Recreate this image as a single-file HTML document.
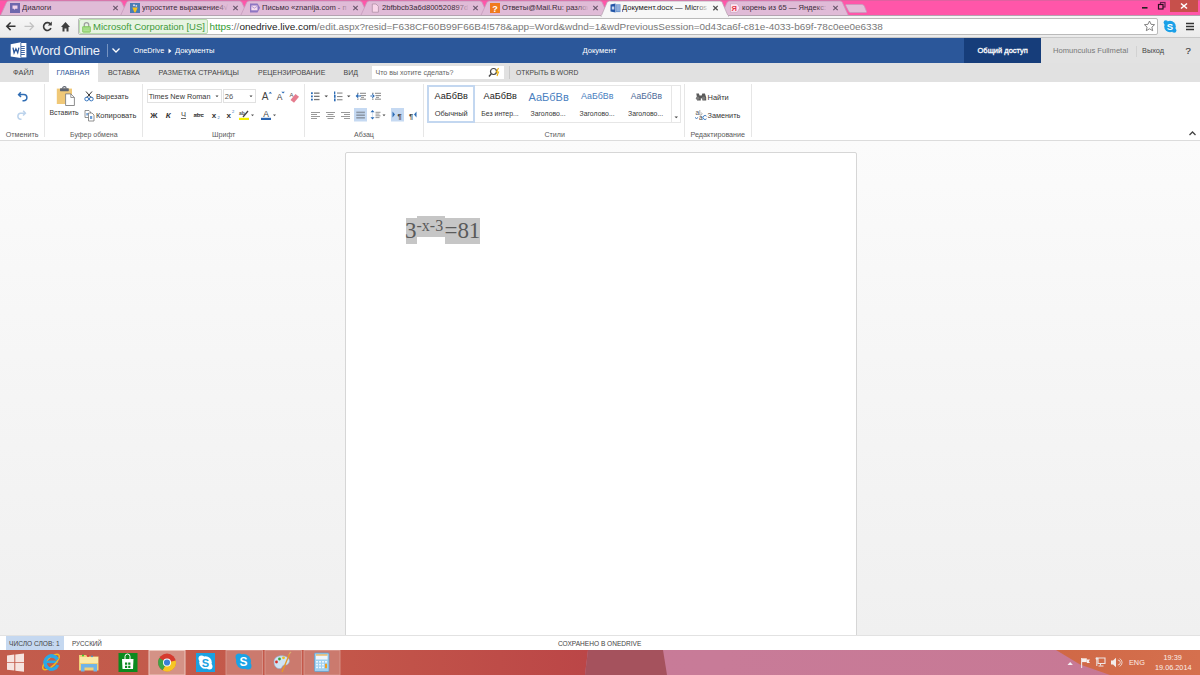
<!DOCTYPE html>
<html><head><meta charset="utf-8">
<style>
*{margin:0;padding:0;box-sizing:border-box}
html,body{width:1200px;height:675px;overflow:hidden;background:#fafafa;font-family:"Liberation Sans",sans-serif;position:relative}
.a{position:absolute;white-space:nowrap}
.t{position:absolute;white-space:nowrap;line-height:10px;height:10px}
/* chrome */
#strip{left:0;top:0;width:1200px;height:16px;background:#ff56a9;border-top:1px solid #e060a0}
.tt{top:3px;font-size:7.6px;color:#3a2b37;width:86px;overflow:hidden}
.tx{font-size:9px;color:#5a4a58}
#toolbar{left:0;top:15px;width:1200px;height:23px;background:linear-gradient(#f7f7f7,#ebebeb);border-top:1px solid #b4a3b0;border-bottom:1px solid #c8c8c8}
#omni{left:78px;top:18px;width:1080px;height:17px;background:#fff;border:1px solid #bababa;border-radius:2px}
#ev{left:79px;top:19px;width:129px;height:15px;background:#e7f4e2;border:1px solid #b8dcae;border-radius:2px}
/* word header */
#hdr{left:0;top:38px;width:1200px;height:25px;background:#2b579a}
#share{left:964px;top:38px;width:77px;height:25px;background:#163d7a}
#user{left:1041px;top:38px;width:159px;height:25px;background:#e2e2e2}
#tabs{left:0;top:63px;width:1200px;height:19px;background:#e1e1e1}
.rt{font-size:7.1px;color:#444}
#ribbon{left:0;top:82px;width:1200px;height:59px;background:#fff;border-bottom:1px solid #dcdcdc}
.sep{position:absolute;width:1px;background:#e6e6e6;top:84px;height:53px}
.gl{font-size:7.1px;color:#5a5a5a}
.lbl{font-size:7.3px;color:#363636}
#page{left:345px;top:152px;width:512px;height:490px;background:#fff;border:1px solid #d6d6d6;border-radius:2px}
#status{left:0;top:635px;width:1200px;height:15px;background:#fff;border-top:1px solid #e2e2e2}
#taskbar{left:0;top:650px;width:1200px;height:25px;background:linear-gradient(90deg,#c0584a 0px,#bf5049 300px,#bd4a47 586px,#a4525c 588px,#a4525c 664px,#c97b97 666px,#c97c98 1060px,#d46a4e 1090px,#d1694d 1200px)}
</style></head><body>
<!-- ========== CHROME ========== -->
<div class="a" id="strip"></div>
<svg class="a" style="left:0;top:0" width="1200" height="17">
<path d="M0.5 15.5 L6.5 2.5 Q7.3 1 9.0 1 L119.4 1 Q121.0 1 121.8 2.5 L127.8 15.5 Z" fill="#e0bbd7" stroke="#c79bbd" stroke-width="0.8"/>
<path d="M120.6 15.5 L126.6 2.5 Q127.4 1 129.1 1 L239.5 1 Q241.1 1 241.9 2.5 L247.9 15.5 Z" fill="#e0bbd7" stroke="#c79bbd" stroke-width="0.8"/>
<path d="M240.7 15.5 L246.7 2.5 Q247.5 1 249.2 1 L359.6 1 Q361.2 1 362.0 2.5 L368.0 15.5 Z" fill="#e0bbd7" stroke="#c79bbd" stroke-width="0.8"/>
<path d="M360.8 15.5 L366.8 2.5 Q367.6 1 369.3 1 L479.7 1 Q481.3 1 482.1 2.5 L488.1 15.5 Z" fill="#e0bbd7" stroke="#c79bbd" stroke-width="0.8"/>
<path d="M480.9 15.5 L486.9 2.5 Q487.7 1 489.4 1 L599.8 1 Q601.4 1 602.2 2.5 L608.2 15.5 Z" fill="#e0bbd7" stroke="#c79bbd" stroke-width="0.8"/>
<path d="M721.1 15.5 L727.1 2.5 Q727.9 1 729.6 1 L840.0 1 Q841.6 1 842.4 2.5 L848.4 15.5 Z" fill="#e0bbd7" stroke="#c79bbd" stroke-width="0.8"/>
<path d="M846.5 4.5 L862 4.5 Q863.5 4.5 864.3 6 L866.5 11.5 Q867 12.5 865.5 12.5 L850.5 12.5 Q849.3 12.5 848.7 11.3 L845.8 5.8 Q845.3 4.5 846.5 4.5Z" fill="#e2bdd8" stroke="#c79bbd" stroke-width="0.8"/>
<!-- window controls -->
<rect x="1170" y="0" width="28" height="12" fill="#c7504b"/>
<path d="M1181 3.5 L1187 8.5 M1187 3.5 L1181 8.5" stroke="#fff" stroke-width="1.6"/>
<rect x="1142" y="7" width="5.5" height="1.6" fill="#222"/>
<rect x="1160.5" y="2.5" width="4.5" height="4.5" fill="none" stroke="#6a2050" stroke-width="1.2"/>
<rect x="1158.5" y="4.5" width="4.5" height="4.5" fill="#ff56a9" stroke="#2a1020" stroke-width="1.2"/>
</svg>
<div class="a" id="toolbar"></div>
<svg class="a" style="left:0;top:0" width="1200" height="17">
<path d="M601.0 16.5 L607.0 2.5 Q607.8 1 609.5 1 L719.9 1 Q721.5 1 722.3 2.5 L728.3 16.5 Z" fill="#f7f7f7" stroke="#b9a3b4" stroke-width="0.8"/>
<rect x="601.5" y="15.2" width="126.5" height="2" fill="#f7f7f7"/>
</svg>
<!-- favicons -->
<svg class="a" style="left:0;top:0" width="880" height="16">
 <rect x="10" y="3" width="10" height="10" fill="#6f68ad"/>
 <path d="M12.5 5.5 h5 v3.2 h-2.2 l-1.3 1.4 v-1.4 h-1.5z" fill="#f2d2ec"/>
 <rect x="130" y="3" width="10" height="10" fill="#4a7db5"/>
 <path d="M132.3 7.5 h5.4 l-2.2 5 h-1z" fill="#f7c21c"/>
 <circle cx="134" cy="5.2" r="1" fill="#dde"/><circle cx="136.3" cy="5.8" r="0.9" fill="#dde"/>
 <path d="M250 3.5 h7.5 l2.6 4.3 l-2.6 4.7 h-7.5z" fill="#8e76c2"/>
 <rect x="251.3" y="5.5" width="6.2" height="4.8" fill="#f6dcef"/>
 <path d="M251.3 6 l3.1 2.2 l3.1 -2.2" stroke="#9c82c8" stroke-width="0.7" fill="none"/>
 <path d="M372.3 4 h3.7 l2.4 2.4 v5.8 h-6.1z" fill="#f9d6ea" stroke="#a88a9e" stroke-width="0.7"/>
 <rect x="490" y="3" width="10" height="10" fill="#f07a1e"/>
 <text x="495" y="11.5" font-family="Liberation Sans" font-size="9" font-weight="bold" fill="#fff" text-anchor="middle">?</text>
 <path d="M610.5 4.5 L615.5 3.5 V12.5 L610.5 11.5z" fill="#2457a8"/>
 <rect x="611.8" y="6.5" width="2.5" height="3" fill="#c8d6ee"/>
 <rect x="616" y="4.3" width="4.5" height="7.8" fill="#6f98d2"/>
 <path d="M616.5 6 h3.3 M616.5 8 h3.3 M616.5 10 h3.3" stroke="#c9d9f0" stroke-width="0.7"/>
 <path d="M730.5 3.8 h6.8 l2.5 4 l-2.5 4.5 h-6.8z" fill="#fde6f3" stroke="#c9a4be" stroke-width="0.7"/>
 <text x="734.3" y="11" font-family="Liberation Sans" font-size="7.5" font-weight="bold" fill="#e3354a" text-anchor="middle">Я</text>
</svg>
<div class="t tt" style="left:22px">Диалоги</div>
<div class="t tt" style="left:142px">упростите выражение4√</div>
<div class="t tt" style="left:262px">Письмо «znanija.com - п</div>
<div class="t tt" style="left:382px">2bfbbcb3a6d800520897d0</div>
<div class="t tt" style="left:502px">Ответы@Mail.Ru: разлож</div>
<div class="t tt" style="left:622px;color:#222">Документ.docx — Micros</div>
<div class="t tt" style="left:742px">корень из 65 — Яндекс: н</div>
<svg class="a" style="left:0;top:0" width="880" height="16">
 <defs>
  <linearGradient id="fadeP" x1="0" x2="1"><stop offset="0" stop-color="#e0bbd7" stop-opacity="0"/><stop offset="1" stop-color="#e0bbd7"/></linearGradient>
  <linearGradient id="fadeW" x1="0" x2="1"><stop offset="0" stop-color="#f7f7f7" stop-opacity="0"/><stop offset="1" stop-color="#f7f7f7"/></linearGradient>
 </defs>
 <rect x="96" y="2" width="13" height="12" fill="url(#fadeP)"/>
 <rect x="216" y="2" width="13" height="12" fill="url(#fadeP)"/>
 <rect x="336" y="2" width="13" height="12" fill="url(#fadeP)"/>
 <rect x="456" y="2" width="13" height="12" fill="url(#fadeP)"/>
 <rect x="576" y="2" width="13" height="12" fill="url(#fadeP)"/>
 <rect x="696" y="2" width="13" height="12" fill="url(#fadeW)"/>
 <rect x="816" y="2" width="13" height="12" fill="url(#fadeP)"/>
 <g stroke="#67546a" stroke-width="1.15">
  <path d="M113.3 5.9 l4.4 4.3 M117.7 5.9 l-4.4 4.3"/>
  <path d="M233.3 5.9 l4.4 4.3 M237.7 5.9 l-4.4 4.3"/>
  <path d="M353.3 5.9 l4.4 4.3 M357.7 5.9 l-4.4 4.3"/>
  <path d="M473.3 5.9 l4.4 4.3 M477.7 5.9 l-4.4 4.3"/>
  <path d="M593.3 5.9 l4.4 4.3 M597.7 5.9 l-4.4 4.3"/>
  <path d="M833.3 5.9 l4.4 4.3 M837.7 5.9 l-4.4 4.3"/>
 </g>
 <path d="M713.3 5.9 l4.4 4.3 M717.7 5.9 l-4.4 4.3" stroke="#505050" stroke-width="1.3"/>
</svg>
<!-- toolbar icons -->
<svg class="a" style="left:0;top:16px" width="80" height="22">
 <path d="M7 10.3 h8.5 M10.6 6.5 l-3.8 3.8 l3.8 3.8" stroke="#353535" stroke-width="1.5" fill="none"/>
 <path d="M33.5 10.3 h-9 M29.7 6.5 l3.8 3.8 l-3.8 3.8" stroke="#c2c2c2" stroke-width="1.3" fill="none"/>
 <path d="M50.6 8.2 A3.9 3.9 0 1 0 51 12.2" stroke="#3a3a3a" stroke-width="1.6" fill="none"/>
 <path d="M51.8 5.6 v4 h-4z" fill="#3a3a3a"/>
 <path d="M61 11 l4.5 -5 l4.5 5 h-1.5 v4.5 h-2 v-3 h-2 v3 h-2 v-4.5z" fill="#3e3e3e"/>
</svg>
<div class="a" id="omni"></div>
<div class="a" id="ev"></div>
<svg class="a" style="left:80px;top:18px" width="14" height="18">
 <path d="M4.3 9 v-2.2 a2.2 2.2 0 0 1 4.4 0 v2.2" stroke="#a0a0a0" stroke-width="1.3" fill="none"/>
 <rect x="2.5" y="8.5" width="8" height="5.8" rx="0.8" fill="#9ad77a" stroke="#78c052" stroke-width="0.6"/>
 <path d="M3.5 11 h6 M3.5 12.6 h6" stroke="#c9ecb6" stroke-width="0.5"/>
</svg>
<div class="t" style="left:93px;top:21.5px;font-size:9.5px;color:#3e9a3a">Microsoft Corporation [US]</div>
<div class="t" style="left:209.5px;top:21.5px;font-size:9.96px;color:#777"><span style="color:#2f9a2f">https</span>://<span style="color:#222">onedrive.live.com</span>/edit.aspx?resid=F638CF60B99F66B4!578&amp;app=Word&amp;wdnd=1&amp;wdPreviousSession=0d43ca6f-c81e-4033-b69f-78c0ee0e6338</div>
<svg class="a" style="left:1140px;top:16px" width="60" height="22">
 <path d="M9.5 5 l1.5 3.3 l3.6 0.4 l-2.7 2.4 l0.8 3.6 l-3.2 -1.9 l-3.2 1.9 l0.8 -3.6 l-2.7 -2.4 l3.6 -0.4z" fill="#fff" stroke="#777" stroke-width="0.9" stroke-linejoin="round"/>
 <circle cx="30" cy="10.5" r="5.8" fill="#1aa0e8"/>
 <circle cx="25.8" cy="6.5" r="2.2" fill="#1aa0e8"/><circle cx="34.2" cy="14.5" r="2.2" fill="#1aa0e8"/>
 <text x="30" y="14" font-family="Liberation Sans" font-size="9.5" font-weight="bold" fill="#fff" text-anchor="middle">S</text>
 <path d="M46 7.5 h8 M46 10.5 h8 M46 13.5 h8" stroke="#333" stroke-width="1.5"/>
</svg>

<!-- ========== WORD HEADER ========== -->
<div class="a" id="hdr"></div>
<div class="a" id="share"></div>
<div class="a" id="user"></div>
<svg class="a" style="left:0;top:38px" width="130" height="25">
 <rect x="20.6" y="5" width="5.8" height="14.4" fill="#fff"/>
 <path d="M21 8.5 h3.8 M21 10.5 h3.8 M21 12.5 h3.8 M21 14.5 h3.8 M21 16.5 h3.8" stroke="#2b579a" stroke-width="0.9"/>
 <path d="M10.7 6.2 L20.8 4.2 L20.8 20.1 L10.7 18.5z" fill="#fff"/>
 <path d="M13 9.6 L14.1 14.8 L15.9 10.8 L17.7 14.8 L18.9 9.6" stroke="#2b579a" stroke-width="1.3" fill="none" stroke-linejoin="miter"/>
 <rect x="20.5" y="5" width="0.8" height="14.5" fill="#2b579a"/>
 <rect x="107" y="6" width="0.8" height="13" fill="#8aa4cc"/>
 <path d="M112.5 10.5 l3.5 3.5 l3.5 -3.5" stroke="#fff" stroke-width="1.3" fill="none"/>
</svg>
<div class="t" style="left:30.5px;top:46.2px;font-size:13px;letter-spacing:-0.25px;color:#eef2f8">Word Online</div>
<div class="t" style="left:133.5px;top:46px;font-size:7.3px;color:#fff">OneDrive</div>
<svg class="a" style="left:168px;top:48px" width="5" height="6"><path d="M0.5 0.5 L3.5 3 L0.5 5.5z" fill="#fff"/></svg>
<div class="t" style="left:175px;top:46px;font-size:7.7px;color:#fff">Документы</div>
<div class="t" style="left:582.5px;top:46px;font-size:7.6px;color:#fff">Документ</div>
<div class="t" style="left:977.5px;top:46px;font-size:7.5px;-webkit-text-stroke:0.3px #fff;color:#fff">Общий доступ</div>
<div class="t" style="left:1053px;top:45.7px;font-size:7.6px;color:#777">Homunculus Fullmetal</div>
<div class="a" style="left:1135.5px;top:45.5px;width:1px;height:11px;background:#d2d2d2"></div>
<div class="t" style="left:1142px;top:45.7px;font-size:7.35px;color:#444">Выход</div>
<div class="t" style="left:1185.5px;top:45.5px;font-size:9.5px;-webkit-text-stroke:0.2px #444;color:#444">?</div>

<!-- ribbon tabs -->
<div class="a" id="tabs"></div>
<div class="a" style="left:49px;top:63px;width:49px;height:19px;background:#fff"></div>
<div class="t rt" style="left:13px;top:67.9px;font-size:7.4px">ФАЙЛ</div>
<div class="t rt" style="left:56.5px;top:67.9px;font-size:7.2px;color:#2b579a">ГЛАВНАЯ</div>
<div class="t rt" style="left:108px;top:67.9px">ВСТАВКА</div>
<div class="t rt" style="left:158.5px;top:67.9px;font-size:7.23px">РАЗМЕТКА СТРАНИЦЫ</div>
<div class="t rt" style="left:258px;top:67.9px;font-size:7px">РЕЦЕНЗИРОВАНИЕ</div>
<div class="t rt" style="left:343.5px;top:67.9px;font-size:7px">ВИД</div>
<div class="a" style="left:372px;top:66px;width:132px;height:13px;background:#fff"></div>
<div class="t" style="left:375.5px;top:67.5px;font-size:7.06px;color:#666">Что вы хотите сделать?</div>
<svg class="a" style="left:488px;top:66px" width="14" height="13">
 <circle cx="5.5" cy="5.5" r="3" stroke="#444" stroke-width="1.2" fill="none"/>
 <path d="M3.3 7.7 l-2.3 2.8" stroke="#444" stroke-width="1.4"/>
 <path d="M10.5 2 l-2 4 h2 l-1.5 4" stroke="#f0b000" stroke-width="1.1" fill="none"/>
</svg>
<div class="a" style="left:509px;top:66px;width:1px;height:13px;background:#c9c9c9"></div>
<div class="t rt" style="left:516px;top:67.9px;font-size:6.8px">ОТКРЫТЬ В WORD</div>

<!-- ribbon body -->
<div class="a" id="ribbon"></div>
<div class="sep" style="left:44px"></div>
<div class="sep" style="left:142px"></div>
<div class="sep" style="left:304px"></div>
<div class="sep" style="left:423px"></div>
<div class="sep" style="left:684px"></div>
<div class="sep" style="left:751px"></div>
<!-- group labels -->
<div class="t gl" style="left:5.8px;top:130.3px;font-size:7.15px">Отменить</div>
<div class="t gl" style="left:70px;top:130.3px;font-size:7px">Буфер обмена</div>
<div class="t gl" style="left:212px;top:130.3px">Шрифт</div>
<div class="t gl" style="left:354px;top:130.3px">Абзац</div>
<div class="t gl" style="left:544.5px;top:130.3px">Стили</div>
<div class="t gl" style="left:690.5px;top:130.3px;font-size:7.17px">Редактирование</div>
<!-- undo/redo -->
<svg class="a" style="left:14px;top:88px" width="18" height="34">
 <path d="M6.8 4.2 L4.6 6.6 L7 8.9" stroke="#2f6cb3" stroke-width="1.5" fill="none" stroke-linejoin="miter"/>
 <path d="M5 6.6 H9.8 A3.1 3.1 0 0 1 9.8 12.8 H8.5" stroke="#2f6cb3" stroke-width="1.5" fill="none"/>
 <path d="M9.2 22.8 L11.4 25.2 L9 27.5" stroke="#bcd3ec" stroke-width="1.5" fill="none"/>
 <path d="M11 25.2 H6.2 A3.1 3.1 0 0 0 6.2 31.2 H7.5" stroke="#bcd3ec" stroke-width="1.5" fill="none"/>
</svg>
<!-- paste -->
<svg class="a" style="left:55px;top:85px" width="22" height="22">
 <rect x="1.8" y="3.6" width="15.2" height="15.4" fill="#f0c877"/>
 <rect x="5" y="3.2" width="8.8" height="3" rx="0.6" fill="#5e6470"/>
 <path d="M7.6 3.4 a1.8 1.8 0 0 1 3.6 0" fill="none" stroke="#5e6470" stroke-width="1.1"/>
 <path d="M10.6 8.9 h5.2 l3.6 3.6 v8 h-8.8z" fill="#fff" stroke="#808080" stroke-width="0.9"/>
 <path d="M15.8 8.9 v3.6 h3.6" fill="none" stroke="#808080" stroke-width="0.8"/>
</svg>
<div class="t lbl" style="left:49.5px;top:108.1px;font-size:6.9px">Вставить</div>
<svg class="a" style="left:83px;top:90px" width="13" height="32">
 <path d="M3 1.5 L8.5 8 M9 1.5 L3.5 8" stroke="#333" stroke-width="1"/>
 <circle cx="3.7" cy="9" r="1.9" fill="none" stroke="#3a78c0" stroke-width="1"/>
 <circle cx="8.3" cy="9" r="1.9" fill="none" stroke="#3a78c0" stroke-width="1"/>
 <path d="M2 20.5 h4 l1.5 1.5 v5.5 h-5.5z" fill="#fff" stroke="#777" stroke-width="0.8"/>
 <path d="M5.5 23 h3.5 l2 2 v6 h-5.5z" fill="#fff" stroke="#777" stroke-width="0.8"/>
 <rect x="7" y="26" width="2.2" height="3" fill="#6fa0d8"/>
 <rect x="3.3" y="23" width="1.6" height="2.5" fill="#6fa0d8"/>
</svg>
<div class="t lbl" style="left:96px;top:92.1px;font-size:7.3px">Вырезать</div>
<div class="t lbl" style="left:96px;top:110.8px;font-size:7.5px">Копировать</div>
<!-- font group -->
<div class="a" style="left:147px;top:89px;width:75px;height:14px;border:1px solid #e1e1e1;background:#fff"></div>
<div class="t lbl" style="left:148.7px;top:92.1px;font-size:7.3px">Times New Roman</div>
<div class="a" style="left:223px;top:89px;width:33px;height:14px;border:1px solid #e1e1e1;background:#fff"></div>
<div class="t lbl" style="left:224.8px;top:92.1px;font-size:7.5px;color:#555">26</div>
<svg class="a" style="left:140px;top:86px" width="170" height="38">
 <path d="M75.5 9.5 h3 l-1.5 1.8z M109.5 9.5 h3 l-1.5 1.8z" fill="#444"/>
 <text x="125" y="14" font-family="Liberation Sans" font-size="10" fill="#444" text-anchor="middle">A</text>
 <path d="M128.5 7.5 l1.8 -1.8 l1.8 1.8z" fill="#2b6cb8"/>
 <text x="139.5" y="14" font-family="Liberation Sans" font-size="8.5" fill="#444" text-anchor="middle">A</text>
 <path d="M141.3 5.7 h3.6 l-1.8 1.8z" fill="#2b6cb8"/>
 <text x="151.5" y="11" font-family="Liberation Sans" font-size="6" fill="#555" text-anchor="middle">A</text>
 <path d="M150.5 14 l5 -6 l3.5 2.8 l-5 6z" fill="#e57c8e"/>
 <text x="13.8" y="31.8" font-family="Liberation Sans" font-size="8" font-weight="bold" fill="#333" text-anchor="middle">Ж</text>
 <text x="28.2" y="31.8" font-family="Liberation Sans" font-size="8" font-weight="bold" font-style="italic" fill="#333" text-anchor="middle">К</text>
 <text x="43.5" y="31" font-family="Liberation Sans" font-size="7.5" fill="#444" text-anchor="middle">Ч</text>
 <rect x="41" y="32" width="5" height="0.8" fill="#444"/>
 <text x="58.7" y="31" font-family="Liberation Sans" font-size="6" font-weight="bold" fill="#444" text-anchor="middle">abc</text>
 <rect x="54" y="28.4" width="9.5" height="0.7" fill="#444"/>
 <text x="74" y="31.8" font-family="Liberation Sans" font-size="8" font-weight="bold" fill="#333" text-anchor="middle">x</text>
 <text x="78.5" y="33" font-family="Liberation Sans" font-size="4" fill="#2b6cb8" text-anchor="middle">2</text>
 <text x="88.7" y="31.8" font-family="Liberation Sans" font-size="8" font-weight="bold" fill="#333" text-anchor="middle">x</text>
 <text x="93" y="27" font-family="Liberation Sans" font-size="4" fill="#2b6cb8" text-anchor="middle">2</text>
 <text x="102" y="29" font-family="Liberation Sans" font-size="5" font-weight="bold" fill="#555" text-anchor="middle">ab</text>
 <path d="M103 31 l5 -6" stroke="#444" stroke-width="1.3"/>
 <rect x="99" y="31.8" width="10" height="2.2" fill="#f5f000"/>
 <path d="M111 28.5 h3 l-1.5 1.8z" fill="#555"/>
 <text x="126" y="31" font-family="Liberation Sans" font-size="8.5" fill="#444" text-anchor="middle">A</text>
 <rect x="121" y="31.8" width="10" height="2.2" fill="#2b64b0"/>
 <path d="M133 28.5 h3 l-1.5 1.8z" fill="#555"/>
</svg>
<!-- paragraph group -->
<svg class="a" style="left:304px;top:86px" width="120" height="38">
 <g fill="#2c6cb6"><rect x="7" y="6.3" width="1.8" height="1.8"/><rect x="7" y="9.5" width="1.8" height="1.8"/><rect x="7" y="12.7" width="1.8" height="1.8"/></g>
 <g fill="#777"><rect x="10" y="6.5" width="5.5" height="1.3"/><rect x="10" y="9.7" width="5.5" height="1.3"/><rect x="10" y="12.9" width="5.5" height="1.3"/></g>
 <path d="M20.5 9.5 h3.5 l-1.75 1.8z M43 9.5 h3.5 l-1.75 1.8z" fill="#444"/>
 <g fill="#2c6cb6"><rect x="30" y="5.5" width="1.3" height="3"/><rect x="30" y="9" width="1.6" height="2.8"/><rect x="30" y="12.5" width="1.6" height="2.8"/></g>
 <g fill="#888"><rect x="33" y="6.5" width="5.5" height="1.1"/><rect x="33" y="10" width="5.5" height="1.1"/><rect x="33" y="13.2" width="5.5" height="1.1"/></g>
 <g fill="#777"><rect x="53" y="6.8" width="1.6" height="0.9"/><rect x="56" y="6.8" width="6" height="0.9"/><rect x="56.5" y="9.2" width="5.5" height="0.9"/><rect x="57" y="10.9" width="3" height="0.8"/><rect x="53" y="12.7" width="1.6" height="0.9"/><rect x="56" y="12.7" width="6" height="0.9"/></g>
 <path d="M51.6 10 l2.6 -2.4 v4.8z M54 9.5 h3 v1 h-3z" fill="#2c6cb6"/>
 <g fill="#777"><rect x="68" y="6.8" width="1.6" height="0.9"/><rect x="71" y="6.8" width="6" height="0.9"/><rect x="71.5" y="9.2" width="5.5" height="0.9"/><rect x="72" y="10.9" width="3" height="0.8"/><rect x="68" y="12.7" width="1.6" height="0.9"/><rect x="71" y="12.7" width="6" height="0.9"/></g>
 <path d="M70.8 10 l-2.6 -2.4 v4.8z M66.4 9.5 h2.6 v1 h-2.6z" fill="#2c6cb6"/>
 <!-- align row -->
 <g fill="#999">
  <rect x="7" y="26" width="9" height="1"/><rect x="7" y="28" width="6" height="1"/><rect x="7" y="30" width="9" height="1"/><rect x="7" y="32" width="6" height="1"/>
  <rect x="22" y="26" width="9" height="1"/><rect x="23.5" y="28" width="6" height="1"/><rect x="22" y="30" width="9" height="1"/><rect x="23.5" y="32" width="6" height="1"/>
  <rect x="37" y="26" width="9" height="1"/><rect x="40" y="28" width="6" height="1"/><rect x="37" y="30" width="9" height="1"/><rect x="40" y="32" width="6" height="1"/>
 </g>
 <rect x="50" y="22" width="13" height="13.5" fill="#c5d9f2"/>
 <g fill="#8e99a8"><rect x="52.3" y="25.6" width="8.6" height="1.6"/><rect x="52.3" y="28.4" width="8.6" height="1.6"/><rect x="52.3" y="31" width="8.6" height="1.6"/></g>
 <path d="M68.5 24 l2 2.2 h-4z M68.5 33.5 l2 -2.2 h-4z" fill="#2c6cb6"/>
 <path d="M68.5 26.5 v4.5" stroke="#8fb0d8" stroke-width="0.7" stroke-dasharray="1 1"/>
 <g fill="#888"><rect x="71.5" y="25.8" width="5" height="0.9"/><rect x="71.5" y="27.6" width="4" height="0.9"/><rect x="71.5" y="29.4" width="5" height="0.9"/><rect x="71.5" y="31.2" width="4" height="0.9"/></g>
 <path d="M78.5 28.5 h3 l-1.5 1.8z" fill="#444"/>
 <rect x="87" y="22" width="13" height="13.5" fill="#c5d9f2"/>
 <path d="M88.5 25.5 l2.5 3 l-2.5 3z" fill="#2c6cb6"/>
 <text x="95.5" y="32.5" font-family="Liberation Sans" font-size="7.5" font-weight="bold" fill="#444" text-anchor="middle">¶</text>
 <text x="107" y="32.5" font-family="Liberation Sans" font-size="7.5" font-weight="bold" fill="#444" text-anchor="middle">¶</text>
 <path d="M112.5 25.5 l-2.5 3 l2.5 3z" fill="#2c6cb6"/>
</svg>
<!-- styles gallery -->
<div class="a" style="left:427px;top:84.5px;width:254px;height:38px;border:1px solid #e6e6e6;background:#fff"></div>
<div class="a" style="left:671px;top:85px;width:1px;height:37px;background:#e6e6e6"></div>
<div class="a" style="left:427px;top:84.5px;width:48px;height:38px;border:2.5px solid #c3d7f0"></div>
<div class="t" style="left:434.5px;top:91.2px;font-size:9.1px;color:#222">АаБбВв</div>
<div class="t lbl" style="left:434.8px;top:109.0px;font-size:7.46px">Обычный</div>
<div class="t" style="left:483.5px;top:91.2px;font-size:9.1px;color:#222">АаБбВв</div>
<div class="t lbl" style="left:481.3px;top:109.0px;font-size:6.9px">Без интер...</div>
<div class="t" style="left:528.5px;top:92.4px;font-size:11px;color:#4a80c0">АаБбВв</div>
<div class="t lbl" style="left:530.5px;top:109.0px;font-size:6.9px">Заголово...</div>
<div class="t" style="left:581px;top:90.9px;font-size:8.9px;color:#4a80c0">АаБбВв</div>
<div class="t lbl" style="left:579.5px;top:109.0px;font-size:6.9px">Заголово...</div>
<div class="t" style="left:630.8px;top:90.9px;font-size:8.5px;color:#4c6a98">АаБбВв</div>
<div class="t lbl" style="left:628px;top:109.0px;font-size:6.9px">Заголово...</div>
<svg class="a" style="left:673px;top:115px" width="7" height="5"><path d="M1.5 1.5 h3.5 l-1.75 1.8z" fill="#444"/></svg>
<!-- editing group -->
<svg class="a" style="left:694px;top:90px" width="14" height="32">
 <path d="M2.3 3.5 h2.6 l0.6 2 h2.2 l0.6 -2 h2.6 l1.3 4 v3 h-3.8 v-2.2 h-1.6 v2.2 h-3.8 v-3z" fill="#5a5a5a"/>
 <circle cx="3.6" cy="8.3" r="1.7" fill="#7a7a7a"/><circle cx="9.6" cy="8.3" r="1.7" fill="#7a7a7a"/>
 <text x="1.5" y="25" font-family="Liberation Sans" font-size="6.5" fill="#555">a</text>
 <path d="M5.8 20 v5 a1.4 1.4 0 0 0 1.4 -2.5" stroke="#888" stroke-width="0.7" fill="none"/>
 <text x="5" y="30" font-family="Liberation Sans" font-size="6.5" fill="#444">a</text>
 <path d="M12.5 26.2 a2 2 0 1 0 0 2.6" stroke="#2c6cb6" stroke-width="0.9" fill="none"/>
 <path d="M1 27.5 l1.5 1 l1.6 -1" stroke="#2c6cb6" stroke-width="0.9" fill="none"/>
</svg>
<div class="t lbl" style="left:707.5px;top:92.6px;font-size:7.46px">Найти</div>
<div class="t lbl" style="left:707.5px;top:111.0px;font-size:7.3px">Заменить</div>
<svg class="a" style="left:1187.5px;top:129.5px" width="10" height="8"><path d="M1.5 5 l3 -3 l3 3" stroke="#444" stroke-width="1.3" fill="none"/></svg>
<!-- canvas strip -->
<div class="a" style="left:0;top:141px;width:1200px;height:494px;background:linear-gradient(#fbfbfb,#f5f5f5 52%,#f0f0f0)"></div>

<!-- ========== PAGE ========== -->
<div class="a" id="page"></div>
<div class="a" style="left:405.8px;top:217.5px;width:11px;height:26.3px;background:#c6c6c6"></div>
<div class="a" style="left:416.8px;top:215.8px;width:28.2px;height:21.2px;background:#c6c6c6"></div>
<div class="a" style="left:445px;top:217.5px;width:35px;height:26.3px;background:#c6c6c6"></div>
<div class="a" style="left:405px;top:209px;font-family:'Liberation Serif',serif;font-size:23px;line-height:34px;color:#5a5a5a">3<span style="font-size:16px;vertical-align:6.6px">-x-3</span><span style="margin-left:1.4px">=8</span><span style="margin-left:-0.4px">1</span></div>

<!-- ========== STATUS ========== -->
<div class="a" id="status"></div>
<div class="a" style="left:6px;top:636px;width:58px;height:14px;background:#c5d8f0"></div>
<div class="t" style="left:9px;top:638.8px;font-size:6.6px;color:#444">ЧИСЛО СЛОВ: 1</div>
<div class="t" style="left:72px;top:638.8px;font-size:6.3px;color:#444">РУССКИЙ</div>
<div class="t" style="left:558px;top:638.8px;font-size:6.57px;color:#444">СОХРАНЕНО В ONEDRIVE</div>

<!-- ========== TASKBAR ========== -->
<svg class="a" style="left:0;top:650px" width="1200" height="25">
 <defs>
  <linearGradient id="tbL" x1="0" x2="1"><stop offset="0" stop-color="#c25c4c"/><stop offset="0.55" stop-color="#c4584a"/><stop offset="1" stop-color="#bb4647"/></linearGradient>
  <linearGradient id="tbP" x1="0" x2="1"><stop offset="0" stop-color="#c87a96"/><stop offset="0.6" stop-color="#c87b98"/><stop offset="1" stop-color="#c77894"/></linearGradient>
  <linearGradient id="tbO" x1="0" x2="1"><stop offset="0" stop-color="#d06846"/><stop offset="1" stop-color="#d5704e"/></linearGradient>
 </defs>
 <rect x="0" y="0" width="1200" height="25" fill="url(#tbP)"/>
 <path d="M0 0 H588 L585 25 H0z" fill="url(#tbL)"/>
 <path d="M588 0 H663 L667 25 H585z" fill="#a5525d"/>
 <path d="M1056 0 H1200 V25 H1110 L1080 14.5z" fill="url(#tbO)"/>
 <!-- buttons -->
 <rect x="149" y="0.5" width="36" height="24.5" fill="#d49286" stroke="#ecc6bd" stroke-width="1"/>
 <rect x="226" y="0.5" width="36.5" height="24.5" fill="#cb7a6e" stroke="#d99c92" stroke-width="0.8"/>
 <rect x="265" y="0.5" width="36.5" height="24.5" fill="#cb7a6e" stroke="#d99c92" stroke-width="0.8"/>
 <rect x="304" y="0.5" width="36" height="24.5" fill="#cb7a6e" stroke="#d99c92" stroke-width="0.8"/>
 <!-- windows logo -->
 <path d="M7 5.5 L14.3 4.6 V12.2 H7z M15.3 4.5 L24 3.5 V12.2 H15.3z M7 13.1 H14.3 V20.6 L7 19.7z M15.3 13.1 H24 V21.7 L15.3 20.7z" fill="#f6e4e0"/>
 <!-- IE -->
 <path d="M57.8 15 A6.6 6.6 0 1 1 57.5 9.5" stroke="#2aa8e6" stroke-width="3.2" fill="none"/>
 <path d="M45.5 11.8 h12.6" stroke="#2aa8e6" stroke-width="2.6"/>
 <ellipse cx="51" cy="12" rx="10.5" ry="4.2" transform="rotate(-42 51 12)" fill="none" stroke="#f0b820" stroke-width="1.4"/>
 <path d="M57.8 15 A6.6 6.6 0 1 1 57.5 9.5" stroke="#2aa8e6" stroke-width="3.2" fill="none" stroke-dasharray="0 8 40"/>
 <!-- explorer -->
 <path d="M79 5 h7 l1.5 1.5 h11 v14 h-19.5z" fill="#f0d27a"/>
 <rect x="80" y="7" width="18" height="6" fill="#fbeaa8"/>
 <circle cx="83" cy="5.5" r="0.9" fill="#2c2"/><circle cx="88" cy="6" r="0.9" fill="#d33"/><circle cx="92" cy="6.3" r="0.9" fill="#39d"/>
 <path d="M81 14 h16 v7.5 h-3.5 v-4 h-9 v4 h-3.5z" fill="#6fb4e8"/>
 <!-- store -->
 <rect x="118.5" y="3" width="19" height="19" fill="#0b8a1e"/>
 <path d="M122 9 h11.5 l-0.5 10 h-10.5z" fill="#fff"/>
 <path d="M125 9 v-2.5 a2.5 2.5 0 0 1 5 0 v2.5" stroke="#fff" stroke-width="1" fill="none"/>
 <path d="M125 12.5 h2.2 v2.2 h-2.2z M128.2 12.5 h2.2 v2.2 h-2.2z M125 15.7 h2.2 v2.2 h-2.2z M128.2 15.7 h2.2 v2.2 h-2.2z" fill="#0b8a1e"/>
 <!-- chrome -->
 <circle cx="167" cy="12.5" r="9" fill="#d63a2f"/>
 <path d="M167 12.5 L175.8 10.6 A9 9 0 0 1 162.5 20.3z" fill="#f6c624"/>
 <path d="M167 12.5 L162.5 20.3 A9 9 0 0 1 159.2 8z" fill="#3aa648"/>
 <circle cx="167" cy="12.5" r="4" fill="#fff"/>
 <circle cx="167" cy="12.5" r="3.1" fill="#3a7fd6"/>
 <!-- skype square -->
 <rect x="196" y="3" width="19" height="19" fill="#1ba1e2"/>
 <circle cx="205.5" cy="12.5" r="6.3" fill="#fff"/>
 <circle cx="201.5" cy="8.5" r="3" fill="#fff"/><circle cx="209.5" cy="16.5" r="3" fill="#fff"/>
 <text x="205.5" y="16.5" font-family="Liberation Sans" font-size="11" font-weight="bold" fill="#1ba1e2" text-anchor="middle">S</text>
 <!-- skype 2 -->
 <circle cx="243.5" cy="11.5" r="7.5" fill="#1aa2e6"/>
 <circle cx="239" cy="7" r="3.5" fill="#1aa2e6"/><circle cx="248" cy="16" r="3.5" fill="#1aa2e6"/>
 <text x="243.5" y="16" font-family="Liberation Sans" font-size="12" font-weight="bold" fill="#fff" text-anchor="middle">S</text>
 <!-- paint -->
 <path d="M274 12 c0 -5 5 -7 10 -6 c5 1 7 5 4 8 c-2 2 -5 0 -6 3 c-1 3 -8 2 -8 -5z" fill="#cfe4f4" stroke="#8fb6d6" stroke-width="0.6"/>
 <circle cx="276.5" cy="12" r="1.4" fill="#d8322a"/><circle cx="279.5" cy="9" r="1.4" fill="#3ba33a"/><circle cx="283.5" cy="7.8" r="1.4" fill="#f0c020"/>
 <path d="M282 22 L289.5 4" stroke="#e59a2a" stroke-width="1.4"/>
 <path d="M288.5 5 l1.5 -3.5 l1.5 1z" fill="#d9b070"/>
 <!-- calc -->
 <rect x="314.5" y="3" width="14.5" height="18.5" rx="1" fill="#9fd0f0" stroke="#5b9fd0" stroke-width="0.7"/>
 <rect x="316" y="4.5" width="11.5" height="5" fill="#eef6fc"/>
 <rect x="316" y="4.5" width="11.5" height="1" fill="#f0a020"/>
 <g fill="#eaf5fc"><rect x="316" y="11" width="2" height="1.6"/><rect x="319" y="11" width="2" height="1.6"/><rect x="322" y="11" width="2" height="1.6"/><rect x="325" y="11" width="2" height="1.6"/>
 <rect x="316" y="13.8" width="2" height="1.6"/><rect x="319" y="13.8" width="2" height="1.6"/><rect x="322" y="13.8" width="2" height="1.6"/>
 <rect x="316" y="16.6" width="2" height="1.6"/><rect x="319" y="16.6" width="2" height="1.6"/><rect x="322" y="16.6" width="2" height="1.6"/></g>
 <rect x="325" y="13.8" width="2" height="4.4" fill="#f0a020"/>
 <!-- tray -->
 <path d="M1067.5 15 l2.7 -3 l2.7 3z" fill="#f4f0f4"/>
 <path d="M1081.6 8 v10" stroke="#eee6e6" stroke-width="1.1"/>
 <path d="M1082 8.3 h4.8 v3.8 h-4.8z" fill="#f6f0ee"/>
 <path d="M1086.8 9.5 h3.2 l-1.2 1.8 l1.2 1.8 h-3.2z" fill="#f6f0ee"/>
 <path d="M1098 8 h7 v5.5 h-7z" fill="none" stroke="#eee6e6" stroke-width="1.1"/>
 <path d="M1100.5 13.5 v2 M1098.5 16 h5 M1096.8 8.5 v7.5" stroke="#eee6e6" stroke-width="1"/>
 <circle cx="1096.8" cy="8.5" r="1.2" fill="#eee6e6"/>
 <path d="M1111 10.5 h2 l3 -2.7 v9.5 l-3 -2.7 h-2z" fill="#f2ecea"/>
 <path d="M1117.8 10 a2.5 2.5 0 0 1 0 5 M1119.6 8.6 a4.3 4.3 0 0 1 0 7.8" stroke="#f2ecea" stroke-width="0.8" fill="none"/>
</svg>
<div class="t" style="left:1129px;top:658px;font-size:7.3px;color:#fbeee8">ENG</div>
<div class="t" style="left:1163.5px;top:653px;font-size:7.3px;color:#fbeee8">19:39</div>
<div class="t" style="left:1155px;top:663px;font-size:7.3px;color:#fbeee8">19.06.2014</div>
</body></html>
